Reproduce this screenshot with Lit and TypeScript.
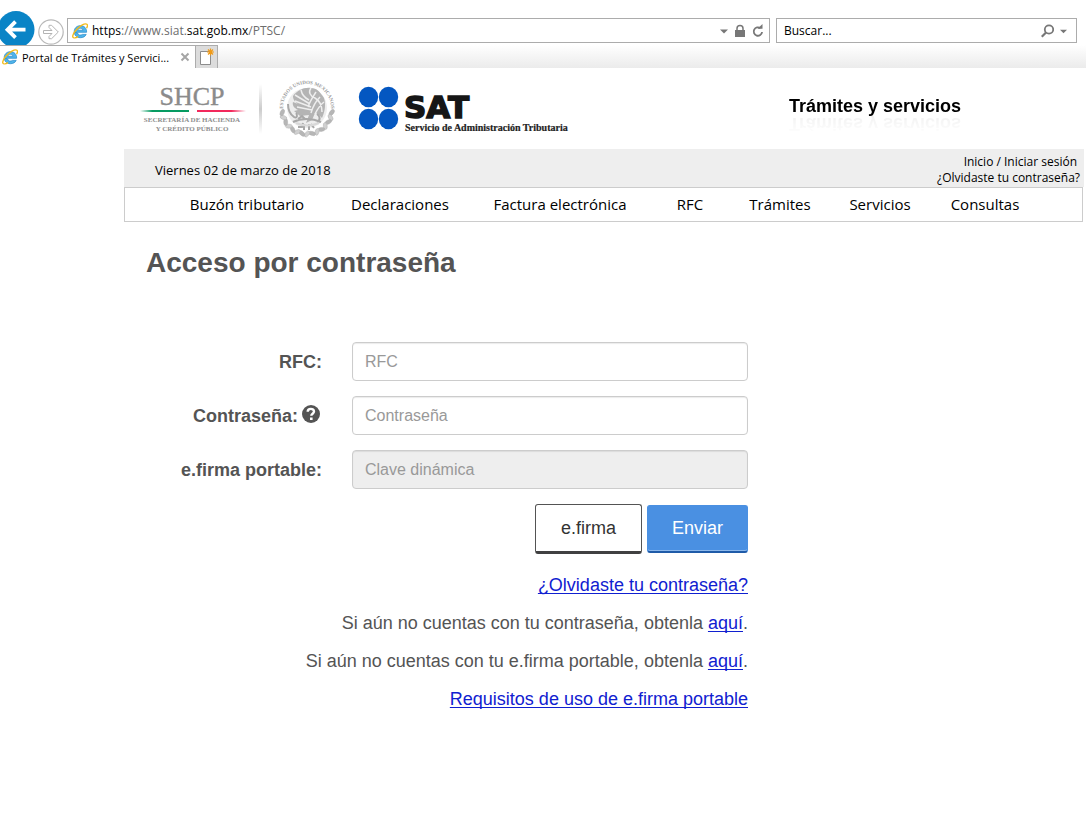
import { LitElement, html, svg, css } from "lit";
import { customElement } from "lit/decorators.js";

const explorerMark = svg`
  <path d="M2 9.300h12.600c.3-4-2.300-6.600-6.200-6.600-3.700 0-6.200 2.500-6.200 6 0 3.600 2.600 6 6.300 6 2.600 0 4.700-1.100 5.700-3.300h-3.900c-1.200 1.200-4.400.9-4.700-1.400zM5.700 7.200c.6-2.500 4.800-2.500 5.300 0z"
    fill="#4fb4ea" stroke="#2387c9" stroke-width=".7"/>
  <path d="M2.500 14.800C-.3 15.200.3 11.500 3.700 7.500 7.500 3.200 12.900-.2 14.900 1.300c.9.700.6 2.300-.3 3.900" fill="none" stroke="#f2bb1c" stroke-width="1.400"/>
  <path d="M2.500 14.800c1.200.1 2.300-.4 3.600-1.200" fill="none" stroke="#f2bb1c" stroke-width="1.300"/>`;

@customElement("browser-bar")
export class BrowserBar extends LitElement {
  static styles = css`
    :host { display: block; font-family: "Open Sans", "Noto Sans", sans-serif; font-size: 12px; color: #000; }
    * { box-sizing: border-box; }
    svg { display: block; flex: none; }
    button { border: 0; background: none; padding: 0; margin: 0; font: inherit; display: block; }
    .toolbar { display: grid; grid-template-columns: 36px 31px 703fr 307fr; height: 45px; padding: 11px 9px 0 0; overflow: hidden; }
    .back { height: 36px; }
    .forward { height: 36px; padding: 6px 2px 0; }
    .field { display: flex; align-items: center; height: 25px; margin-top: 7px; border: 1px solid #acacac; background: #fff; }
    .address { padding: 0 5px 0 4px; }
    .search { margin-left: 6px; padding: 0 9px 0 7px; }
    .url { flex: 1; margin-left: 4px; color: #6d6d6d; white-space: nowrap; text-decoration: none; }
    .host { color: #000; }
    .tools { display: flex; align-items: center; gap: 6px; }
    .query { flex: 1; min-width: 0; border: 0; outline: 0; padding: 0; background: none; font: inherit; color: #000; }
    .query::placeholder { color: #000; opacity: 1; }
    .tabs { display: flex; height: 23px; background: linear-gradient(#fff, #ebebeb); }
    .tab { display: flex; align-items: center; width: 195px; padding: 0 5px 0 2px; background: #fff; border-top: 1px solid #acacac; }
    .title { flex: 1; margin-left: 4px; font-size: 11px; white-space: nowrap; }
    .new { width: 23px; border: 1px solid #acacac; border-bottom: 0; background: #dcdcdc; padding: 0 3px; }
  `;
  render() {
    return html`
      <div class="toolbar">
        <button class="back" aria-label="Atrás">
          <svg width="36" height="36" viewBox="0 0 36 36">
            <circle cx="16" cy="18.500" r="18.500" fill="#0a84c6"/>
            <path d="M25.500 18.700H8M15.500 10.700l-8 8 8 8" fill="none" stroke="#fff" stroke-width="3.800"/>
          </svg>
        </button>
        <button class="forward" aria-label="Adelante">
          <svg width="26" height="26" viewBox="0 0 26 26">
            <circle cx="13" cy="13" r="12.200" fill="#fff" stroke="#b9b9b9" stroke-width="1.200"/>
            <path d="M5.500 11.500h8.500L11 8.500V6.300h2.600l6.700 6.700-6.700 6.700H11v-2.200l3-3H5.500z" fill="none" stroke="#b4b4b4"/>
          </svg>
        </button>
        <div class="field address">
          <svg width="16" height="16" viewBox="0 0 16 16">${explorerMark}</svg>
          <a class="url" href="#"><span class="host">https</span>://www.siat.<span class="host">sat.gob.mx</span>/PTSC/</a>
          <div class="tools">
            <button aria-label="Direcciones"><svg width="8" height="14" viewBox="0 0 8 14"><path d="M0 5.500h8L4 9.500z" fill="#777"/></svg></button>
            <svg width="12" height="14" viewBox="0 0 12 14"><path d="M1 6h10v7H1z" fill="#777"/><path d="M3 7V4.500a3 3 0 0 1 6 0V7" fill="none" stroke="#777" stroke-width="1.500"/></svg>
            <button aria-label="Actualizar"><svg width="12" height="14" viewBox="0 0 12 14"><path d="M8.500 4.200a4.200 4.200 0 1 0 1.600 3.800" fill="none" stroke="#777" stroke-width="1.800"/><path d="M5.500 4.700h5V0z" fill="#777"/></svg></button>
          </div>
        </div>
        <div class="field search">
          <input class="query" type="text" placeholder="Buscar..." aria-label="Buscar">
          <div class="tools">
            <button aria-label="Buscar"><svg width="13" height="14" viewBox="0 0 13 14"><circle cx="8" cy="5.500" r="4.200" fill="none" stroke="#777" stroke-width="1.800"/><path d="M5 8.500L.8 12.700" stroke="#777" stroke-width="2.200"/></svg></button>
            <button aria-label="Proveedores"><svg width="7" height="14" viewBox="0 0 8 14"><path d="M0 5.500h8L4 9.500z" fill="#777"/></svg></button>
          </div>
        </div>
      </div>
      <div class="tabs">
        <div class="tab">
          <svg width="16" height="16" viewBox="0 0 16 16">${explorerMark}</svg>
          <span class="title">Portal de Trámites y Servici...</span>
          <button aria-label="Cerrar"><svg width="10" height="10" viewBox="0 0 10 10"><path d="M1.500 1.500l7 7M8.500 1.500l-7 7" stroke="#a5a5a5" stroke-width="2"/></svg></button>
        </div>
        <button class="new" aria-label="Nueva pestaña">
          <svg width="17" height="20" viewBox="0 0 17 20">
            <path d="M1.500 4.500h10v13h-10z" fill="#fff" stroke="#8c8c8c"/>
            <path d="M11.500 1.500v7M8 5h7M9 2.500l5 5M14 2.500l-5 5" stroke="#f09a16" stroke-width="1.200"/>
          </svg>
        </button>
      </div>`;
  }
}

@customElement("site-header")
export class SiteHeader extends LitElement {
  static styles = css`
    :host { display: block; color: #000; font-family: "Open Sans", "Noto Sans", sans-serif; }
    * { box-sizing: border-box; }
    svg { display: block; flex: none; }
    a { color: inherit; text-decoration: none; white-space: nowrap; }
    .brand { display: flex; justify-content: space-between; height: 81px; padding: 0 123px 0 16px; }
    .logos { display: flex; }
    .slogan { margin: 0; padding-top: 27px; font: bold 18px/22px "Liberation Sans", Arial, sans-serif; }
    .slogan span { display: block; white-space: nowrap; -webkit-box-reflect: below -4px linear-gradient(transparent, rgba(0, 0, 0, 0.06)); }
    .info { display: flex; justify-content: space-between; height: 38px; padding: 5px 4px 0 31px; background: #eee; }
    .date { font-size: 13px; line-height: 18px; padding-top: 7px; }
    .session { display: flex; flex-direction: column; align-items: flex-end; font-size: 12px; line-height: 16px; }
    .login { padding-right: 3px; }
    .menu { display: grid; grid-template-columns: 170fr 136fr 184fr 76fr 104fr 96fr 114fr; height: 35px; margin: 0 1px 0 0; padding: 0 40px 0 37px; border: 1px solid #ccc; font-size: 15px; line-height: 33px; text-align: center; }
  `;
  render() {
    const leaves = Array.from({ length: 15 }, (_, i) => {
      const a = ((8 + i * 11.700) * Math.PI) / 180;
      const x = 30 + 25 * Math.cos(a);
      const y = 31 + 25 * Math.sin(a);
      return svg`<ellipse cx=${x} cy=${y} rx="3.500" ry="2" transform="rotate(${(a * 180) / Math.PI + (i % 2 ? 40 : 120)} ${x} ${y})" fill=${i % 2 ? "#d0d0d0" : "#b6b6b6"} stroke="#aaa" stroke-width=".4"/>`;
    });
    const items = ["Buzón tributario", "Declaraciones", "Factura electrónica", "RFC", "Trámites", "Servicios", "Consultas"];
    return html`
      <header>
        <div class="brand">
          <div class="logos">
            <svg width="198" height="81" viewBox="0 0 198 81" role="img" aria-label="SHCP">
              <defs>
                <linearGradient id="g"><stop offset="0" stop-color="#079b62" stop-opacity="0"/><stop offset=".25" stop-color="#079b62"/></linearGradient>
                <linearGradient id="r"><stop offset=".7" stop-color="#f2295c"/><stop offset="1" stop-color="#f2295c" stop-opacity="0"/></linearGradient>
                <linearGradient id="v" x1="0" x2="0" y1="0" y2="1"><stop offset="0" stop-color="#ccc" stop-opacity="0"/><stop offset=".5" stop-color="#ccc"/><stop offset="1" stop-color="#ccc" stop-opacity="0"/></linearGradient>
                <path id="ring" d="M30 54A24 24 0 0 1 30 6A24 24 0 0 1 30 54"/>
              </defs>
              <g font-family="Liberation Serif, serif" text-anchor="middle">
                <text x="52" y="37" font-size="26" fill="#8b8b8b" stroke="#8b8b8b" stroke-width=".4">SHCP</text>
                <text x="52" y="54" font-size="7" font-weight="bold" fill="#8e8e8e">SECRETARÍA DE HACIENDA</text>
                <text x="52" y="63" font-size="7" font-weight="bold" fill="#8e8e8e">Y CRÉDITO PÚBLICO</text>
              </g>
              <rect y="42" width="49" height="2" fill="url(#g)"/>
              <rect x="57" y="42" width="49" height="2" fill="url(#r)"/>
              <rect x="119" y="16" width="3" height="50" fill="url(#v)"/>
              <g transform="translate(137 10)">
                <text font-family="Liberation Serif, serif" font-size="5" font-weight="bold" fill="#999"><textPath href="#ring" startOffset="50%" text-anchor="middle">ESTADOS UNIDOS MEXICANOS</textPath></text>
                ${leaves}
                <circle cx="30" cy="30" r="20" fill="#ededed"/>
                <path d="M16 18c5-6 11-9 18-8 6 0 9 4 13 10 2 7 1 13-2 20-3-3-5-5-7-5l-3 7-6 3 3-8-9 1-6-5 4-1c-4-2-6-5-5-8l5 2c-4-3-5-5-5-8z" fill="#b4b4b4"/>
                <path d="M18 17l15 9M18 23l16 6M20 29l15 3M34 10c-3 4-1 8 4 10 5 3 7 7 7 14M39 14c-3 5-6 9-8 15M43 19c-4 4-7 9-9 16M47 24c-4 3-7 8-9 12M24 12c1 5 4 8 8 10" fill="none" stroke="#eee" stroke-width="1.500"/>
                <path d="M11 26c0 6 3 11 6 13s4-2 2-4M16 44c8-4 19-4 28 0M21 49h4l1-4M34 46l3 4M27 46v6M32 46v6M40 36c3 2 4 6 0 8M21 41l4-3 3 3" fill="none" stroke="#a8a8a8" stroke-width="2"/>
                <path d="M19 45q11 5 23 0" fill="none" stroke="#d8d8d8" stroke-width="2"/>
              </g>
            </svg>
            <svg width="240" height="81" viewBox="0 0 240 81" role="img" aria-label="SAT">
              <g fill="#0457c1">
                <ellipse cx="30.500" cy="29" rx="9.700" ry="10.300"/><ellipse cx="50.500" cy="29" rx="9.700" ry="10.300"/>
                <ellipse cx="30.500" cy="51" rx="9.700" ry="10.300"/><ellipse cx="50.500" cy="51" rx="9.700" ry="10.300"/>
              </g>
              <text x="66" y="50" font-family="DejaVu Sans, sans-serif" font-size="31" font-weight="bold" fill="#161616" stroke="#161616" stroke-width="1.500">SAT</text>
              <text x="67" y="63" font-family="Liberation Serif, serif" font-size="10" font-weight="bold" fill="#222" stroke="#222" stroke-width=".2">Servicio de Administración Tributaria</text>
            </svg>
          </div>
          <p class="slogan"><span>Trámites y servicios</span></p>
        </div>
        <div class="info">
          <span class="date">Viernes 02 de marzo de 2018</span>
          <div class="session"><a class="login" href="#">Inicio / Iniciar sesión</a><a href="#">¿Olvidaste tu contraseña?</a></div>
        </div>
        <nav class="menu">${items.map((t) => html`<a href="#">${t}</a>`)}</nav>
      </header>`;
  }
}

@customElement("login-form")
export class LoginForm extends LitElement {
  static styles = css`
    :host { display: block; padding: 23px 22px 0; font-family: "Liberation Sans", Arial, sans-serif; color: #545454; font-size: 18px; }
    * { box-sizing: border-box; }
    h1 { margin: 0 0 61px; font-size: 28px; line-height: 36px; font-weight: bold; }
    form { max-width: 602px; }
    .row { display: grid; grid-template-columns: 176px 1fr; column-gap: 30px; align-items: center; margin-bottom: 15px; }
    label { display: flex; justify-content: flex-end; align-items: flex-start; gap: 4px; font-weight: bold; line-height: 24px; white-space: nowrap; }
    .help { padding-right: 2px; }
    .help svg { display: block; margin-top: 1px; }
    input { width: 100%; height: 39px; padding: 0 12px; font: 16px "Liberation Sans", Arial, sans-serif; color: #555; background: #fff; border: 1px solid #ccc; border-radius: 4px; box-shadow: inset 0 1px 1px rgba(0, 0, 0, 0.08); }
    input::placeholder { color: #999; opacity: 1; }
    input:disabled { background: #eee; }
    .actions { display: flex; justify-content: flex-end; align-items: center; gap: 5px; margin-bottom: 12px; }
    button { margin: 0; font: 18px "Liberation Sans", Arial, sans-serif; border-radius: 3px; }
    .firma { height: 50px; padding: 0 25px; color: #333; background: #fff; border: 1px solid #545454; border-bottom: 3px solid #404041; }
    .send { height: 48px; padding: 0 24px; color: #fff; background: #4a90e2; border: 1px solid #4a90e2; border-bottom: 2px solid #1f5ba8; box-shadow: inset 0 -1px #8bb8ec; }
    p { margin: 0; line-height: 38px; text-align: right; }
    a { color: #1020d0; text-decoration: underline 1px; text-underline-offset: 2px; text-decoration-skip-ink: none; }
  `;
  render() {
    return html`
      <h1>Acceso por contraseña</h1>
      <form @submit=${(e: Event) => e.preventDefault()}>
        <div class="row"><label for="rfc">RFC:</label><input id="rfc" type="text" placeholder="RFC"></div>
        <div class="row">
          <label class="help" for="pass">Contraseña:
            <svg width="18" height="18" viewBox="0 0 18 18"><circle cx="9" cy="9" r="9" fill="#545454"/><path d="M5.700 6.700C5.700 2.900 12 2.900 12 6.600c0 2.100-2.700 2.200-2.700 4.200" fill="none" stroke="#fff" stroke-width="2.400"/><path d="M8 12.500h2.600V15H8z" fill="#fff"/></svg>
          </label>
          <input id="pass" type="password" placeholder="Contraseña">
        </div>
        <div class="row"><label for="otp">e.firma portable:</label><input id="otp" type="password" placeholder="Clave dinámica" disabled></div>
        <div class="actions"><button class="firma" type="button">e.firma</button><button class="send" type="submit">Enviar</button></div>
        <p><a href="#">¿Olvidaste tu contraseña?</a></p>
        <p>Si aún no cuentas con tu contraseña, obtenla <a href="#">aquí</a>.</p>
        <p>Si aún no cuentas con tu e.firma portable, obtenla <a href="#">aquí</a>.</p>
        <p><a href="#">Requisitos de uso de e.firma portable</a></p>
      </form>`;
  }
}

@customElement("app-root")
export class AppRoot extends LitElement {
  static styles = css`
    :host { display: block; min-height: 100vh; background: #fff; }
    .page { margin: 0 2px 0 124px; }
  `;
  render() {
    return html`
      <browser-bar></browser-bar>
      <div class="page"><site-header></site-header><main><login-form></login-form></main></div>`;
  }
}
